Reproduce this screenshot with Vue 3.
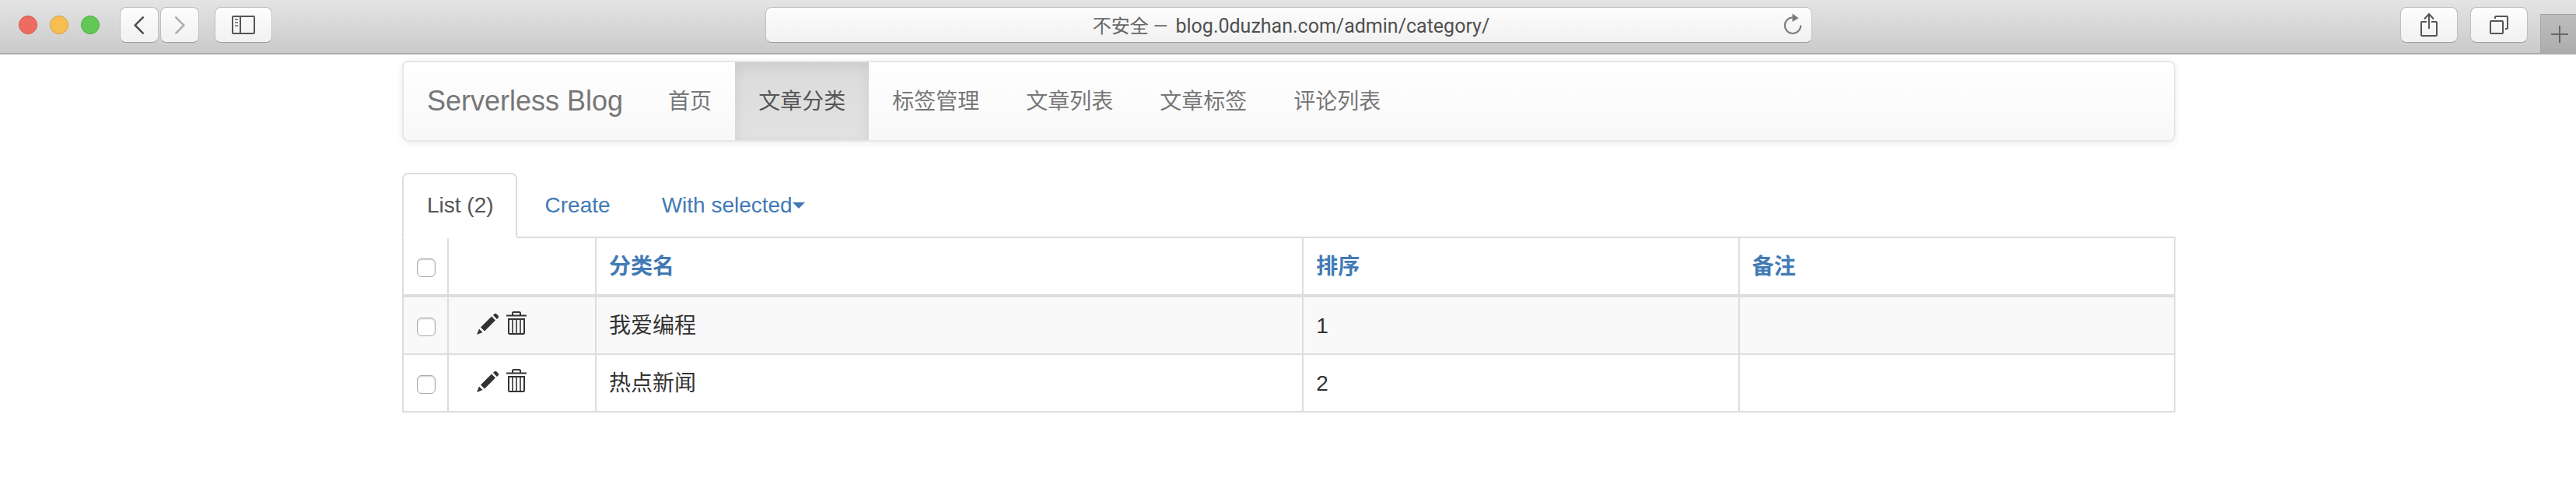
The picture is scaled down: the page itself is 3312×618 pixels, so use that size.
<script setup>
import { ref } from 'vue'

const address = ref('blog.0duzhan.com/admin/category/')

const navItems = [
  { label: '首页' },
  { label: '文章分类', active: true },
  { label: '标签管理' },
  { label: '文章列表' },
  { label: '文章标签' },
  { label: '评论列表' },
]

const rows = ref([
  { id: 1, name: '我爱编程', order: 1, remark: '', checked: false },
  { id: 2, name: '热点新闻', order: 2, remark: '', checked: false },
])

const allChecked = ref(false)
function toggleAll() {
  rows.value.forEach((row) => (row.checked = allChecked.value))
}
</script>

<template>
  <div class="window">
    <header class="toolbar">
      <div class="tools-left">
        <div class="lights">
          <button class="light red" aria-label="Close"></button>
          <button class="light yellow" aria-label="Minimize"></button>
          <button class="light green" aria-label="Zoom"></button>
        </div>
        <div class="history">
          <button class="tool narrow" aria-label="Back">
            <svg width="50" height="44" viewBox="0 0 50 44"><path d="M30 12 L19.500 22.500 L30 33" fill="none" stroke="#4d4d4d" stroke-width="2.600" stroke-linecap="round" /></svg>
          </button>
          <button class="tool narrow" aria-label="Forward">
            <svg width="50" height="44" viewBox="0 0 50 44"><path d="M20 12 L30.500 22.500 L20 33" fill="none" stroke="#ababab" stroke-width="2.600" stroke-linecap="round" /></svg>
          </button>
        </div>
        <button class="tool" aria-label="Show sidebar">
          <svg width="30" height="24" viewBox="0 0 30 24" fill="none" stroke="#555" stroke-width="2">
            <rect x="1" y="1" width="28" height="22" rx="1" />
            <path d="M11 1V23" />
            <path d="M4 5H8M4 9H8M4 13H8" stroke="#8a8a8a" />
          </svg>
        </button>
      </div>

      <div class="address">
        <label class="security" for="address">不安全 —</label>
        <input id="address" v-model="address" class="url" type="text" spellcheck="false" />
        <button class="reload" aria-label="Reload">
          <svg width="24" height="28" viewBox="0 0 24 28">
            <path d="M12 5.500A10.200 10.200 0 1 0 22.200 15.500" fill="none" stroke="#7b7b7b" stroke-width="2" />
            <path d="M11.500 0.500V11L19.500 6.200Z" fill="#7b7b7b" />
          </svg>
        </button>
      </div>

      <div class="tools-right">
        <button class="tool" aria-label="Share">
          <svg width="24" height="32" viewBox="0 0 24 32" fill="none" stroke="#555" stroke-width="2">
            <path d="M9 12H3Q2 12 2 13V29Q2 30 3 30H21Q22 30 22 29V13Q22 12 21 12H15" />
            <path d="M12 21V2M6 8.500L12 2L18 8.500" />
          </svg>
        </button>
        <button class="tool" aria-label="Show all tabs">
          <svg width="24" height="24" viewBox="0 0 24 24" fill="none" stroke="#555" stroke-width="2">
            <rect x="1" y="7" width="16" height="16" rx="1" />
            <path d="M7 4V2Q7 1 8 1H22Q23 1 23 2V16Q23 17 22 17H20" />
          </svg>
        </button>
        <button class="new-tab" aria-label="New tab">
          <svg width="22" height="22" viewBox="0 0 22 22"><path d="M11 0V22M0 11H22" stroke="#666" stroke-width="2" /></svg>
        </button>
      </div>
    </header>

    <div class="page">
      <main class="container">
        <nav class="navbar">
          <a class="brand" href="#">Serverless Blog</a>
          <ul class="nav">
            <li v-for="item in navItems" :key="item.label">
              <a href="#" :class="['nav-link', { active: item.active }]">{{ item.label }}</a>
            </li>
          </ul>
        </nav>

        <ul class="tabs">
          <li><a class="tab active" href="#">List (2)</a></li>
          <li><a class="tab" href="#">Create</a></li>
          <li><a class="tab" href="#">With selected<span class="caret"></span></a></li>
        </ul>

        <table class="list">
          <colgroup>
            <col class="col-check" />
            <col class="col-actions" />
            <col />
            <col class="col-quarter" />
            <col class="col-quarter" />
          </colgroup>
          <thead>
            <tr>
              <th class="check-cell">
                <input v-model="allChecked" type="checkbox" aria-label="Select all records" @change="toggleAll" />
              </th>
              <th></th>
              <th><a href="#">分类名</a></th>
              <th><a href="#">排序</a></th>
              <th><a href="#">备注</a></th>
            </tr>
          </thead>
          <tbody>
            <tr v-for="row in rows" :key="row.id">
              <td class="check-cell">
                <input v-model="row.checked" type="checkbox" :aria-label="`Select ${row.name}`" />
              </td>
              <td>
                <div class="actions">
                  <a href="#" class="action" aria-label="Edit record">
                    <svg width="30" height="30" viewBox="0 0 30 30" fill="#333">
                      <path d="M1 30L4 22.500L8.500 27ZM6 20.500L20 6.500L25 11.500L11 25.500ZM22 5L23.500 3.500Q25 2 26.500 3.500L28.500 5.500Q30 7 28.500 8.500L27 10Z" />
                    </svg>
                  </a>
                  <button class="action" aria-label="Delete record">
                    <svg width="26" height="30" viewBox="0 0 26 30" fill="none" stroke="#333" stroke-width="2">
                      <path d="M0 5.500H26" />
                      <path d="M8 5V2.500Q8 1 9.500 1H16.500Q18 1 18 2.500V5" />
                      <path d="M3 10H23V27.500Q23 29 21.500 29H4.500Q3 29 3 27.500Z" />
                      <path d="M8 10V29M13 10V29M18 10V29" stroke-width="1.600" />
                    </svg>
                  </button>
                </div>
              </td>
              <td>{{ row.name }}</td>
              <td>{{ row.order }}</td>
              <td>{{ row.remark }}</td>
            </tr>
          </tbody>
        </table>
      </main>
    </div>
  </div>
</template>

<style>
body {
  margin: 0;
  background: #fff;
}
</style>

<style scoped>
.window,
.window * {
  box-sizing: border-box;
}

.window {
  font-family: "Liberation Sans", "Noto Sans CJK SC", sans-serif;
  font-size: 28px;
  line-height: 40px;
  color: #333;
}

button {
  padding: 0;
  border: 0;
  background: none;
  font: inherit;
}

svg {
  display: block;
}

a {
  color: #427ab5;
  text-decoration: none;
}

ul {
  margin: 0;
  padding: 0;
  list-style: none;
}

/* Browser toolbar */
.toolbar {
  display: grid;
  grid-template-columns: 1fr minmax(0, 1346px) 1fr;
  padding: 9px 0 0 2px;
  background: linear-gradient(#e4e4e4, #cacaca);
  border-bottom: 2px solid #acacac;
}

.tools-left,
.tools-right {
  display: flex;
  align-items: flex-start;
}

.tools-left {
  padding-left: 22px;
}

.tools-right {
  justify-content: flex-end;
  gap: 16px;
}

.lights {
  display: flex;
  gap: 16px;
  margin: 11px 26px 0 0;
}

.light {
  width: 24px;
  height: 24px;
  border: 1px solid;
  border-radius: 50%;
}

.red {
  background: #ed6b60;
  border-color: #d6524a;
}

.yellow {
  background: #f6be50;
  border-color: #d9a03e;
}

.green {
  background: #62c756;
  border-color: #4aab3d;
}

.history {
  display: flex;
  gap: 2px;
  margin-right: 20px;
}

.tool,
.address {
  height: 46px;
  border: 1px solid #bfbfbf;
  border-bottom-color: #9e9e9e;
  border-radius: 8px;
  background: linear-gradient(#fdfdfd, #f1f1f1);
}

.tool {
  display: flex;
  align-items: center;
  justify-content: center;
  width: 74px;
}

.narrow {
  width: 50px;
}

.address {
  display: flex;
  align-items: baseline;
  justify-content: center;
  gap: 10px;
  position: relative;
  padding: 6px 0 0 6px;
  font-family: Roboto, "Noto Sans CJK SC", sans-serif;
  font-size: 24px;
  line-height: 36px;
  color: #666;
}

.url {
  field-sizing: content;
  padding: 0;
  border: 0;
  outline: 0;
  background: none;
  font: inherit;
  font-size: 25px;
  color: #505050;
}

.reload {
  position: absolute;
  right: 12px;
  top: 7px;
}

.new-tab {
  display: flex;
  align-items: center;
  justify-content: center;
  width: 46px;
  height: 50px;
  margin-top: 9px;
  padding-left: 2px;
  border: solid #a3a3a3;
  border-width: 1px 0 0 1px;
  background: linear-gradient(#bdbdbd, #adadad);
}

/* Page */
.page {
  padding: 8px 0 88px 2px;
}

.container {
  max-width: 2280px;
  margin: 0 auto;
}

.navbar {
  display: flex;
  border: 2px solid #e7e7e7;
  border-radius: 8px;
  background: linear-gradient(#fff, #f8f8f8);
  box-shadow: 0 2px 10px rgba(0, 0, 0, 0.075);
  margin-bottom: 40px;
}

.brand {
  padding: 30px 28px 30px 30px;
  font-size: 36px;
  color: #777;
}

.nav {
  display: flex;
}

.nav-link {
  display: block;
  padding: 31px 30px 29px;
  color: #777;
}

.nav-link.active {
  color: #555;
  background: linear-gradient(#dbdbdb, #e2e2e2);
  box-shadow: inset 0 6px 18px rgba(0, 0, 0, 0.075);
}

.tabs {
  display: flex;
  gap: 4px;
  border-bottom: 2px solid #ddd;
}

.tab {
  display: flex;
  align-items: center;
  margin-bottom: -2px;
  padding: 20px 28px 20px 30px;
  border: 2px solid transparent;
  border-radius: 8px 8px 0 0;
}

.tab.active {
  color: #555;
  background: #fff;
  border-color: #ddd #ddd #fff;
}

.caret {
  border: solid transparent;
  border-width: 8px 8px 0;
  border-top-color: currentColor;
}

.list {
  width: 100%;
  table-layout: fixed;
  border-collapse: separate;
  border-spacing: 0;
  border-left: 2px solid #ddd;
}

.col-check {
  width: 58px;
}

.col-actions {
  width: 190px;
}

.col-quarter {
  width: 24.6%;
}

th,
td {
  height: 74px;
  padding: 17px 16px 15px;
  border: solid #ddd;
  border-width: 0 2px 2px 0;
  text-align: left;
  vertical-align: top;
}

th {
  height: 76px;
  border-bottom-width: 4px;
}

tbody tr:nth-child(odd) {
  background: #f9f9f9;
}

.check-cell {
  padding: 26px 0 0 17px;
}

input[type="checkbox"] {
  appearance: none;
  display: block;
  width: 24px;
  height: 24px;
  margin: 0;
  border: 1px solid #aaa;
  border-radius: 6px;
  background: #fff;
  box-shadow: inset 0 1px 2px rgba(0, 0, 0, 0.2);
}

input[type="checkbox"]:checked {
  background: #337ab7;
}

.actions {
  display: flex;
  gap: 9px;
  padding: 1px 0 0 19px;
}
</style>
